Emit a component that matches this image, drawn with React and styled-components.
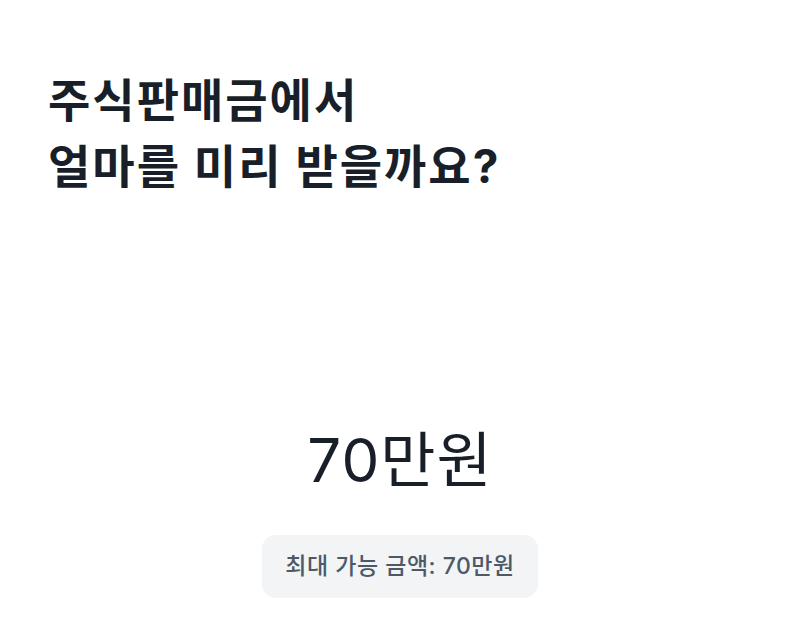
import React from "react";
import styled, { createGlobalStyle } from "styled-components";

const Global = createGlobalStyle`
  html, body { margin: 0; padding: 0; background: #ffffff; }
  body { font-family: Inter, "Noto Sans CJK KR", sans-serif; -webkit-font-smoothing: antialiased; }
`;

const Page = styled.main`
  box-sizing: border-box;
  min-height: 100vh;
  display: flex;
  flex-direction: column;
  padding: 67px 48px 0;
`;

const Title = styled.h1`
  margin: 0;
  font-size: 46px;
  font-weight: 700;
  line-height: 66px;
  letter-spacing: 2px;
  color: #191f28;
`;

const AmountBlock = styled.section`
  display: flex;
  flex-direction: column;
  align-items: center;
  margin-top: 225px;
  gap: 39px;
`;

const Amount = styled.div`
  font-size: 60px;
  font-weight: 400;
  line-height: 72px;
  color: #191f28;
  letter-spacing: 1px;
`;

const Chip = styled.div`
  background: #f2f4f6;
  border-radius: 14px;
  padding: 16px 23px;
  font-size: 23px;
  line-height: 31px;
  font-weight: 500;
  letter-spacing: 0.5px;
  color: #4e5968;
`;

export default function App() {
  return (
    <>
      <Global />
      <Page>
        <Title>
          주식판매금에서
          <br />
          얼마를 미리 받을까요?
        </Title>
        <AmountBlock>
          <Amount>70만원</Amount>
          <Chip>최대 가능 금액: 70만원</Chip>
        </AmountBlock>
      </Page>
    </>
  );
}
